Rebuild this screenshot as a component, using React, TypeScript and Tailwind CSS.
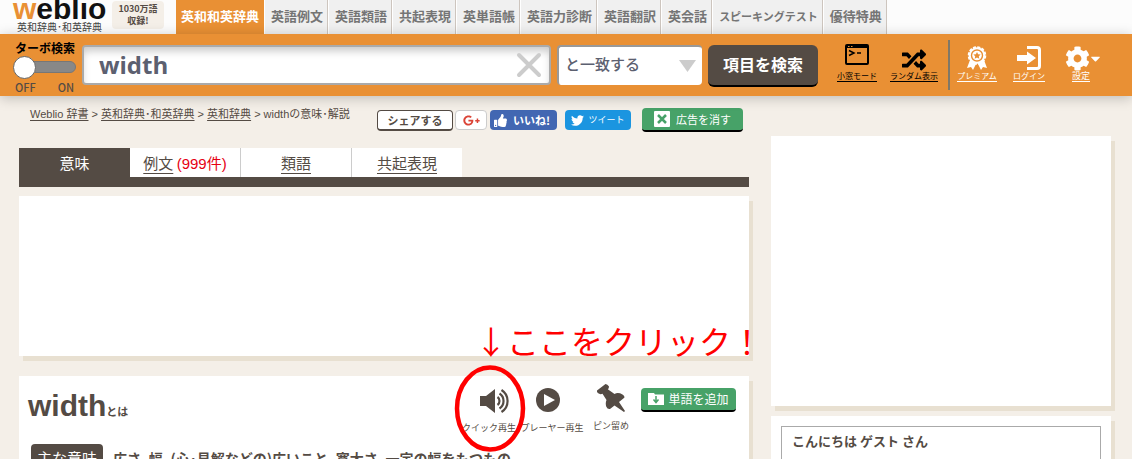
import type { ReactNode } from "react";
import { FaCog, FaRandom, FaThumbsUp, FaTwitter, FaGooglePlusG, FaCaretDown } from "react-icons/fa";

const navItems = ["英語例文", "英語類語", "共起表現", "英単語帳", "英語力診断", "英語翻訳", "英会話"];

function ToolLink({ label, className, children }: { label: string; className: string; children: ReactNode }) {
  return (
    <a href="#" className={`flex h-[37px] shrink-0 flex-col items-center justify-end leading-[11px] ${className}`}>
      <span className="flex h-6 items-center">{children}</span>
      <span className="whitespace-nowrap border-b">{label}</span>
    </a>
  );
}

function WindowIcon() {
  return (
    <svg width="24" height="21" viewBox="0 0 24 21" aria-hidden="true">
      <rect x="1" y="1" width="22" height="19" rx="1" fill="none" stroke="currentColor" strokeWidth="2" />
      <path d="M1 1h22v3H1z" fill="currentColor" />
      <path d="M3 2.5h1.5M6 2.5h1.5" stroke="#e99034" />
      <path d="M4 6.5l5 2.5-5 2.5M12 9h4" fill="none" stroke="currentColor" strokeWidth="1.5" />
    </svg>
  );
}

function MedalIcon() {
  return (
    <svg width="22" height="24" viewBox="0 0 22 24" aria-hidden="true">
      <path d="M4 14L1 22l4-1 2 3 4-8 4 8 2-3 4 1-3-8z" fill="currentColor" />
      <circle cx="11" cy="9.5" r="8.3" fill="currentColor" stroke="currentColor" strokeWidth="2" strokeDasharray="3 1.35" />
      <circle cx="11" cy="9.5" r="5.5" fill="none" stroke="#e99034" strokeWidth="1.4" />
      <path d="M11 6l1.1 2.3 2.5.3-1.8 1.7.5 2.5L11 11.600l-2.300 1.200.5-2.500-1.800-1.700 2.500-.3z" fill="#e99034" />
    </svg>
  );
}

function LoginIcon() {
  return (
    <svg width="24" height="24" viewBox="0 0 24 24" aria-hidden="true">
      <path d="M10 1.500h10a2.500 2.500 0 0 1 2.500 2.500v16a2.500 2.500 0 0 1-2.500 2.500H10" fill="none" stroke="currentColor" strokeWidth="3" />
      <path d="M0 9h10V5.500L19 12l-9 6.500V15H0z" fill="currentColor" />
    </svg>
  );
}

function PinIcon() {
  return (
    <svg width="28" height="28" viewBox="0 0 28 28" aria-hidden="true">
      <path
        d="M0 6.500L8.500 0Q10.500 0 12 2.500Q12 4.500 10.800 5.300L17.500 10Q21 8 25.500 10.500Q28 12 27.300 13.700L22 18L28 27L27 28L17.500 21.500L13 25Q10.500 25.500 9.200 22.500Q8.200 19 9.500 16L5.500 9.800Q3 10.800 0.800 9Q-0.500 7.500 0 6.500Z"
        fill="currentColor"
      />
    </svg>
  );
}

function Header() {
  return (
    <header className="flex h-[34px] items-end overflow-hidden bg-[#fcfcfc]">
      <a href="#" className="flex w-[99px] shrink-0 flex-col pl-[13px]">
        <span className="font-['Liberation_Sans'] text-[30px] font-bold leading-6 text-[#111]">
          <span className="text-[#e99034]">w</span>eblio
        </span>
        <span className="whitespace-nowrap pb-px pl-1 text-[10px] leading-3 text-[#444]">英和辞典･和英辞典</span>
      </a>
      <div className="mb-[5px] ml-[13px] mr-3 w-[52px] shrink-0 self-end rounded bg-[#f4efe8] py-0.5 text-center text-[9px] font-bold leading-3 text-[#544b44]">
        1030万語
        <br />
        収録!
      </div>
      <nav className="flex h-full whitespace-nowrap text-[13px] font-bold leading-8 text-[#757575]">
        <a href="#" className="bg-[#e99034] px-[5px] text-white">英和和英辞典</a>
        {navItems.map((t) => (
          <a key={t} href="#" className="border-l border-r border-l-white border-r-[#cdc5be] bg-[#f0f0f0] pl-1.5 pr-1">
            {t}
          </a>
        ))}
        <a href="#" className="border-l border-r border-l-white border-r-[#cdc5be] bg-[#f0f0f0] pl-1.5 pr-1 text-[11px]">スピーキングテスト</a>
        <a href="#" className="border-l border-r border-l-white border-r-[#cdc5be] bg-[#f0f0f0] pl-1.5 pr-1">優待特典</a>
      </nav>
    </header>
  );
}

function SearchBar() {
  return (
    <form className="relative flex h-[62px] items-start bg-[#e99034] shadow-[0_2px_12px_rgba(0,0,0,0.22)]">
      <div className="ml-[13px] mt-2 w-[69px] shrink-0">
        <p className="whitespace-nowrap pl-0.5 text-xs font-bold leading-3 text-black">ターボ検索</p>
        <button type="button" role="switch" aria-checked="false" aria-label="ターボ検索" className="mt-px flex h-6 w-[63px] items-center">
          <span className="z-10 size-[23px] shrink-0 rounded-full border border-[#666] bg-white" />
          <span className="-ml-3 h-3 flex-1 rounded-full border border-[#777] bg-[#888]" />
        </button>
        <p className="flex w-[63px] justify-between px-0.5 text-[11px] font-medium leading-4 text-[#544b44]">
          <span>OFF</span>
          <span>ON</span>
        </p>
      </div>
      <div className="mt-[11px] flex h-10 min-w-0 flex-1 items-center rounded-sm border-2 border-[#aaa] bg-white pr-[7px] shadow-[inset_0_6px_8px_-2px_rgba(0,0,0,0.22)]">
        <input aria-label="検索語" defaultValue="width" className="min-w-0 flex-1 bg-transparent pl-[15px] font-['Open_Sans'] text-2xl font-bold text-[#5c6070] outline-none" />
        <button type="reset" aria-label="クリア">
          <svg width="26" height="26" viewBox="0 0 26 26" aria-hidden="true">
            <path d="M3 3l20 20M23 3L3 23" stroke="#ccc" strokeWidth="4" strokeLinecap="round" />
          </svg>
        </button>
      </div>
      <div className="ml-1.5 mt-[11px] grid h-10 w-[145px] shrink-0 items-center rounded border-t-2 border-l-2 border-[#999] bg-white">
        <select aria-label="検索方法" className="col-start-1 row-start-1 h-full w-full appearance-none bg-transparent pb-1 pl-1.5 text-[15px] font-medium text-[#5c6070] outline-none">
          <option>と一致する</option>
        </select>
        <svg className="pointer-events-none col-start-1 row-start-1 mr-[6px] justify-self-end" width="17" height="12" viewBox="0 0 17 12" aria-hidden="true">
          <path d="M0 0h17L8.500 12z" fill="#ccc" />
        </svg>
      </div>
      <button type="submit" className="ml-1.5 mt-[11px] h-[42px] w-[110px] shrink-0 rounded-md border-b-2 border-black bg-[#544b44] pb-0.5 text-base font-bold text-white">
        項目を検索
      </button>
      <div className="mt-[11px] flex w-[130px] shrink-0 justify-between pl-[18px] pr-[8px] text-black">
        <ToolLink label="小窓モード" className="w-[42px] text-[8px]">
          <span className="pb-2"><WindowIcon /></span>
        </ToolLink>
        <ToolLink label="ランダム表示" className="w-[52px] text-[8px]">
          <FaRandom size={24} className="mt-1" />
        </ToolLink>
      </div>
      <div className="mt-1.5 h-[50px] w-0.5 shrink-0 bg-[#807868]" />
      <div className="mr-6 mt-[11px] flex w-[158px] shrink-0 text-white">
        <ToolLink label="プレミアム" className="w-[54px] text-[8px]"><MedalIcon /></ToolLink>
        <ToolLink label="ログイン" className="w-[50px] text-[8px]"><LoginIcon /></ToolLink>
        <ToolLink label="設定" className="w-[54px] text-[9px]">
          <FaCog size={25} className="ml-1.5" />
          <FaCaretDown size={15} className="-ml-0.5" />
        </ToolLink>
      </div>
    </form>
  );
}

function ShareRow() {
  return (
    <div className="flex h-6 items-start">
      <p className="flex-1 whitespace-nowrap pl-[11px] font-['Liberation_Sans','Noto_Sans_CJK_JP',sans-serif] text-[11px] leading-3">
        <a href="#" className="underline underline-offset-2">Weblio 辞書</a> &gt;{" "}
        <a href="#" className="underline underline-offset-2">英和辞典･和英辞典</a> &gt;{" "}
        <a href="#" className="underline underline-offset-2">英和辞典</a> &gt; widthの意味･解説
      </p>
      <div className="flex items-center whitespace-nowrap">
        <button className="h-[21px] w-[76px] rounded border border-b-2 border-[#544b44] bg-white text-[11px] font-bold leading-4">シェアする</button>
        <button aria-label="Google+" className="ml-0.5 flex h-5 w-8 items-center justify-center rounded-sm border border-[#ccc] bg-white text-[#db4437]">
          <FaGooglePlusG size={17} />
        </button>
        <button className="ml-[3px] flex h-5 w-[67px] items-center gap-1.5 rounded-sm bg-[#4267b2] pl-1 text-[11px] font-bold text-white">
          <FaThumbsUp size={13} className="shrink-0" />
          いいね!
        </button>
        <button className="ml-2 flex h-5 w-[66px] items-center justify-center gap-1 rounded-sm bg-[#1b95e0] text-[9px] text-white">
          <FaTwitter size={13} />
          ツイート
        </button>
        <button className="ml-[11px] mr-[6px] flex h-6 w-[101px] items-center justify-center gap-1.5 rounded border-b-2 border-black bg-[#47a268] text-[11px] text-white">
          <svg width="16" height="16" viewBox="0 0 16 16" aria-hidden="true">
            <rect width="16" height="16" rx="1" fill="#fff" />
            <path d="M4 4l8 8M12 4l-8 8" stroke="#47a268" strokeWidth="2.500" />
          </svg>
          広告を消す
        </button>
      </div>
    </div>
  );
}

function ContentTabs() {
  return (
    <nav className="mt-4 flex h-[39px] border-b-[10px] border-[#544b44] text-[15px] leading-[29px]">
      <a href="#" className="w-[111px] bg-[#544b44] text-center text-white">意味</a>
      <a href="#" className="w-[111px] border-r border-[#ccc] bg-white text-center">
        <span className="underline underline-offset-4">例文</span> <span className="font-['Liberation_Sans','Noto_Sans_CJK_JP',sans-serif] text-[#e60012]">(999件)</span>
      </a>
      <a href="#" className="w-[111px] border-r border-[#ccc] bg-white text-center underline underline-offset-4">類語</a>
      <a href="#" className="w-[110px] bg-white text-center underline underline-offset-4">共起表現</a>
    </nav>
  );
}

function EntryCard() {
  return (
    <article className="relative mt-5 bg-white pb-8 shadow-[4px_5px_0_#e8e0d1]">
      <div className="flex h-[68px] items-start">
        <h1 className="flex-1 whitespace-nowrap pl-[9px] pt-3 font-['Liberation_Sans','Noto_Sans_CJK_JP',sans-serif] text-[30px] font-bold leading-9">
          width<span className="text-[11px]">とは</span>
        </h1>
        <div className="flex whitespace-nowrap pt-2 text-[9px] leading-3">
          <button className="flex w-[60px] flex-col items-center">
            <span className="flex h-[38px] items-center pb-1 pl-3">
              <svg width="31" height="26" viewBox="0 0 31 26" aria-hidden="true">
                <path d="M0 8h6l9-7v24l-9-7H0z" fill="currentColor" />
                <path d="M17.500 9a5 5 0 0 1 0 8M19.500 5.500a9 9 0 0 1 0 15M21.500 2a13 13 0 0 1 0 22" fill="none" stroke="currentColor" strokeWidth="2.200" />
              </svg>
            </span>
            クイック再生
          </button>
          <button className="flex w-[66px] flex-col items-center">
            <span className="flex h-[38px] items-center pb-[7px] pr-2">
              <svg width="24" height="24" viewBox="0 0 24 24" aria-hidden="true">
                <circle cx="12" cy="12" r="12" fill="currentColor" />
                <path d="M8 6v12l11-6z" fill="#fff" />
              </svg>
            </span>
            プレーヤー再生
          </button>
          <button className="flex w-[52px] flex-col items-center">
            <span className="flex h-9 items-center pb-2">
              <PinIcon />
            </span>
            <span>ピン留め</span>
          </button>
        </div>
        <button className="ml-1 mr-[13px] mt-3 flex h-6 w-[95px] items-center justify-center gap-1 rounded border-b-2 border-black bg-[#47a268] text-xs text-white">
          <svg width="16" height="14" viewBox="0 0 16 14" aria-hidden="true">
            <path d="M0 1h6l1 1.500h9V13H0z" fill="#fff" />
            <path d="M8 4v6M5.500 7.500L8 10.500l2.500-3" fill="none" stroke="#47a268" strokeWidth="1.500" />
          </svg>
          単語を追加
        </button>
      </div>
      <div className="flex items-center whitespace-nowrap pl-3 text-sm font-bold">
        <span className="w-[72px] rounded-sm bg-[#544b44] py-0.5 text-center text-[15px] font-normal leading-6 text-white">主な意味</span>
        <p className="ml-2.5">広さ, 幅, (心･見解などの)広いこと, 寛大さ, 一定の幅をもつもの</p>
      </div>
      <svg className="pointer-events-none absolute right-[223px] -top-[11px]" width="72" height="87" viewBox="0 0 72 87" aria-hidden="true">
        <ellipse cx="36" cy="43.500" rx="33" ry="41" fill="none" stroke="#f00" strokeWidth="4.500" />
      </svg>
      <p className="pointer-events-none absolute -right-[14px] -top-[60px] whitespace-nowrap text-[32px] leading-[48px] text-[#f00]">↓ここをクリック！</p>
    </article>
  );
}

export default function App() {
  return (
    <div className="h-screen overflow-hidden bg-[#f4efe8] font-['Noto_Sans_CJK_JP',sans-serif] text-[#544b44]">
      <Header />
      <SearchBar />
      <div className="grid grid-cols-[minmax(0,1fr)_340px] gap-[22px] pl-[19px] pr-[21px]">
        <main className="pt-3">
          <ShareRow />
          <ContentTabs />
          <div className="mt-[9px] h-40 bg-white shadow-[4px_5px_0_#e8e0d1]" />
          <EntryCard />
        </main>
        <aside className="pt-10">
          <div className="h-[270px] bg-white shadow-[4px_5px_0_#e8e0d1]" />
          <section className="mt-2.5 bg-white p-2.5 shadow-[4px_5px_0_#e8e0d1]">
            <div className="h-20 border border-[#aaa] px-2.5 py-1">
              <p className="text-[13px] font-bold leading-5">こんにちは ゲスト さん</p>
            </div>
          </section>
        </aside>
      </div>
    </div>
  );
}
